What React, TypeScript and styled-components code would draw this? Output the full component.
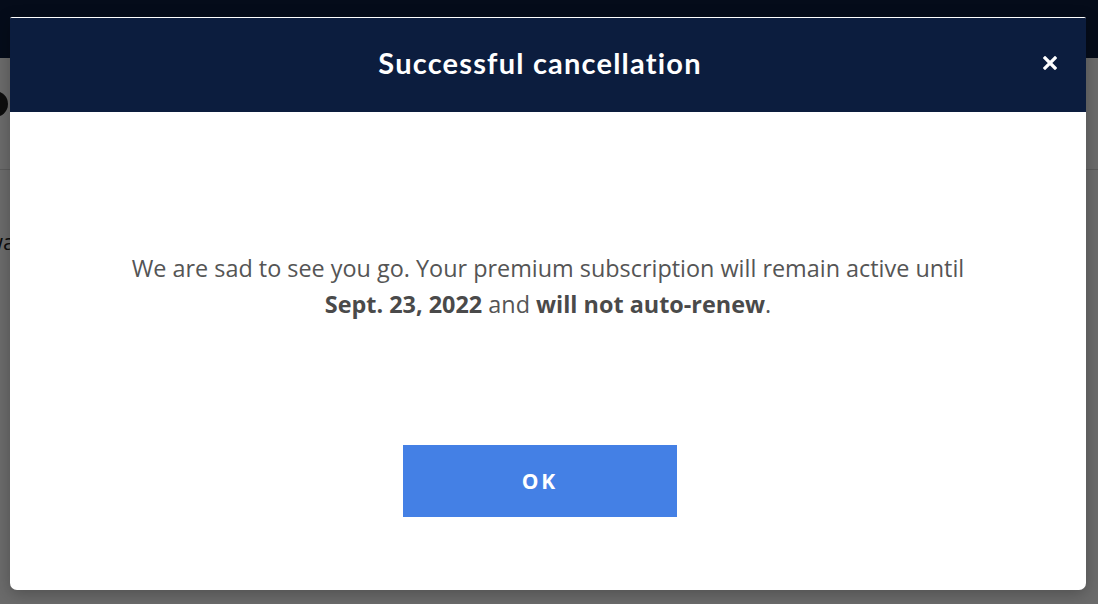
import React from "react";
import styled, { createGlobalStyle } from "styled-components";

const Global = createGlobalStyle`
  html, body { margin: 0; padding: 0; }
  body {
    width: 1098px;
    height: 604px;
    overflow: hidden;
    font-family: "Open Sans", "Liberation Sans", sans-serif;
    background: #ffffff;
  }
  #root { width: 1098px; height: 604px; }
`;

const Page = styled.div`
  position: relative;
  width: 1098px;
  height: 604px;
  overflow: hidden;
  background: #ffffff;
`;

const TopBar = styled.div`
  height: 58px;
  background: #0c1d3e;
`;

const PageHeader = styled.div`
  height: 112px;
  border-bottom: 1px solid #d8d8d8;
  display: flex;
  align-items: center;
  padding-bottom: 20px;
  box-sizing: border-box;
`;

const Avatar = styled.div`
  width: 26px;
  height: 26px;
  border-radius: 50%;
  background: #222;
  margin-left: -18px;
`;

const PageBody = styled.div`
  display: flex;
  flex-direction: column;
  padding-top: 56px;
`;

const PageLine = styled.div<{ $color?: string; $gap?: number }>`
  display: flex;
  justify-content: space-between;
  font-size: 22px;
  color: ${(p) => p.$color || "#222"};
  margin-left: -14px;
  margin-right: -14px;
  margin-top: ${(p) => p.$gap || 0}px;
  height: 30px;
  line-height: 30px;
`;

const Overlay = styled.div`
  position: absolute;
  inset: 0;
  background: rgba(0, 0, 0, 0.58);
  display: flex;
  align-items: flex-start;
  padding: 17px 12px 0 10px;
`;

const Modal = styled.div`
  width: 1076px;
  height: 573px;
  background: #ffffff;
  border-radius: 2px 2px 7px 7px;
  overflow: hidden;
  display: flex;
  flex-direction: column;
  box-shadow: 0 4px 16px rgba(0, 0, 0, 0.25);
  padding-top: 1px;
  box-sizing: border-box;
`;

const Header = styled.div`
  height: 94px;
  background: #0c1d3e;
  display: flex;
  align-items: center;
  justify-content: center;
  position: relative;
  flex-shrink: 0;
  padding-right: 16px;
  padding-bottom: 6px;
  box-sizing: border-box;
`;

const Title = styled.h2`
  margin: 0;
  font-family: "Lato", "Open Sans", sans-serif;
  font-weight: 700;
  font-size: 29px;
  color: #ffffff;
  letter-spacing: 1.2px;
`;

const Close = styled.button`
  position: absolute;
  right: 29px;
  top: 38px;
  width: 14px;
  height: 14px;
  padding: 0;
  border: 0;
  background: transparent;
  cursor: pointer;
  display: flex;
`;

const Body = styled.div`
  flex: 1;
  display: flex;
  flex-direction: column;
  align-items: center;
  padding-top: 138px;
`;

const Message = styled.p`
  margin: 0;
  width: 860px;
  text-align: center;
  font-size: 23.4px;
  line-height: 36px;
  color: #555555;
  strong { font-weight: 700; color: #4a4a4a; }
`;

const OkButton = styled.button`
  margin-top: 123px;
  margin-right: 16px;
  width: 274px;
  height: 72px;
  border: 0;
  background: #4480e5;
  color: #ffffff;
  font-family: "Open Sans", sans-serif;
  font-weight: 700;
  font-size: 21px;
  letter-spacing: 3px;
  cursor: pointer;
`;

export default function App() {
  return (
    <>
      <Global />
      <Page>
        <TopBar />
        <PageHeader>
          <Avatar />
        </PageHeader>
        <PageBody>
          <PageLine>
            <span>wa</span>
            <span>n</span>
          </PageLine>
          <PageLine $color="#2a5db0" $gap={88}>
            <span>p</span>
          </PageLine>
        </PageBody>
        <Overlay>
          <Modal>
            <Header>
              <Title>Successful cancellation</Title>
              <Close aria-label="Close">
                <svg width="14" height="14" viewBox="0 0 14 14">
                  <path d="M2 2 L12 12 M12 2 L2 12" stroke="#fff" strokeWidth="3.2" strokeLinecap="square" />
                </svg>
              </Close>
            </Header>
            <Body>
              <Message>
                We are sad to see you go. Your premium subscription will remain active until
                <br />
                <strong>Sept. 23, 2022</strong> and <strong>will not auto-renew</strong>.
              </Message>
              <OkButton>OK</OkButton>
            </Body>
          </Modal>
        </Overlay>
      </Page>
    </>
  );
}
